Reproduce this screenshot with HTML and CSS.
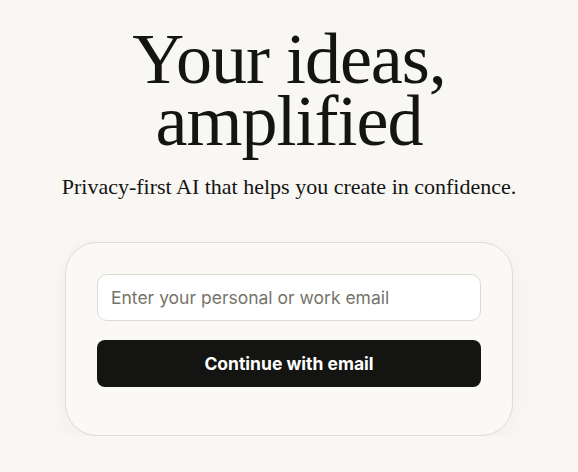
FILE: index.html
```html
<!DOCTYPE html>
<html>
<head>
  <title>Sign in</title>
  <link rel="stylesheet" href="styles.css">
</head>
<body>

<main class="hero">
  <h1 class="headline">
    <span class="line">Your ideas,</span>
    <span class="line">amplified</span>
  </h1>
  <p class="tagline">Privacy-first AI that helps you create in confidence.</p>

  <!-- Login Card -->
  <form class="card" onsubmit="return false">
    <input type="email" class="email" placeholder="Enter your personal or work email">
    <button type="submit" class="continue">Continue with email</button>
  </form>
</main>

</body>
</html>
```

FILE: styles.css
```css
body {
  margin: 0;
  padding: 0;
  background: #f8f7f3;
  color: #141413;
}

.hero {
  display: flex;
  flex-direction: column;
  align-items: center;
  padding-top: 28px;
}

.headline {
  font-family: 'Liberation Serif', serif;
  font-weight: 400;
  font-size: 72px;
  line-height: 62px;
  letter-spacing: -1px;
  text-align: center;
  margin: 0;
}

.line {
  display: block;
}

.tagline {
  font-family: 'Liberation Serif', serif;
  font-size: 22px;
  margin: 22px 0 0;
}

.card {
  box-sizing: border-box;
  width: 448px;
  margin-top: 42px;
  padding: 31px 31px 48px;
  display: flex;
  flex-direction: column;
  gap: 19px;
  background: #faf9f5;
  border: 1px solid #dedcd5;
  border-radius: 32px;
  box-shadow: 0 6px 24px rgba(0,0,0,0.04);
}

.email {
  box-sizing: border-box;
  height: 47px;
  padding: 0 13px;
  font-family: 'Inter', sans-serif;
  font-size: 17.5px;
  background: #fff;
  border: 1px solid #dcdad3;
  border-radius: 10px;
  outline: none;
}

.email::placeholder {
  color: #77736b;
}

.continue {
  height: 47px;
  font-family: 'Inter', sans-serif;
  font-size: 17.5px;
  font-weight: 700;
  color: #fff;
  background: #141413;
  border: none;
  border-radius: 8px;
  cursor: pointer;
}
```
